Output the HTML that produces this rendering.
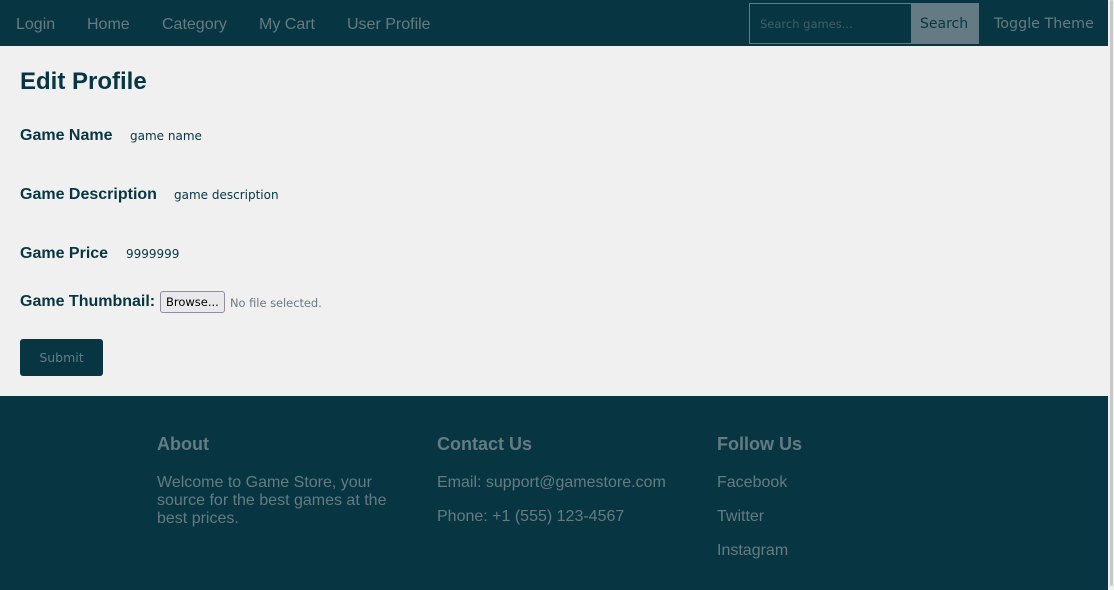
<!DOCTYPE html>
<html><head><style>
*{margin:0;padding:0;box-sizing:border-box}
body{width:1114px;height:590px;overflow:hidden;background:#f0f0f0;font-family:"Liberation Sans",sans-serif;position:relative}
.a{position:absolute;white-space:nowrap}
nav{position:absolute;left:0;top:0;width:1108px;height:46px;background:#073642}
nav .l{color:#657b83;font-size:16px;top:16px}
.dj{font-family:"DejaVu Sans",sans-serif}
footer{position:absolute;left:0;top:396px;width:1108px;height:194px;background:#073642;color:#657b83}
footer h3{position:absolute;font-size:18px;font-weight:bold;color:#657b83}
footer p{position:absolute;font-size:16px;line-height:18px;color:#657b83}
.lab{font-size:16px;font-weight:bold;color:#073642}
.val{color:#073642}
.sb{position:absolute;left:1108px;top:0;width:6px;height:590px;background:#f0f0f0}
.sb div{position:absolute;left:2px;top:0;width:3px;height:586px;background:#c8c8c8;border-radius:2px}
</style></head><body>
<nav>
<span class="a l" style="left:16px">Login</span>
<span class="a l" style="left:87px">Home</span>
<span class="a l" style="left:162px">Category</span>
<span class="a l" style="left:259px">My Cart</span>
<span class="a l" style="left:347px">User Profile</span>
<div class="a" style="left:749px;top:3px;width:163px;height:41px;border:1px solid #657b83;background:#073642"></div>
<span class="a dj" style="left:760px;top:17px;font-size:11.5px;color:#3f5f68">Search games...</span>
<div class="a" style="left:911px;top:3px;width:68px;height:41px;background:#657b83"></div>
<span class="a dj" style="left:920px;top:16px;font-size:14px;color:#073642">Search</span>
<span class="a dj" style="left:994px;top:16px;font-size:14.3px;color:#657b83">Toggle Theme</span>
</nav>
<div class="a" style="left:20px;top:68px;font-size:24px;font-weight:bold;color:#073642">Edit Profile</div>
<span class="a lab" style="left:20px;top:127px">Game Name</span><span class="a val dj" style="left:130px;top:129px;font-size:12px">game name</span>
<span class="a lab" style="left:20px;top:186px">Game Description</span><span class="a val dj" style="left:174px;top:188px;font-size:12px">game description</span>
<span class="a lab" style="left:20px;top:245px">Game Price</span><span class="a val dj" style="left:126px;top:247px;font-size:12px">9999999</span>
<span class="a lab" style="left:20px;top:293px">Game Thumbnail:</span>
<div class="a dj" style="left:160px;top:291px;width:65px;height:22px;border:1px solid #8f8f9d;border-radius:3px;background:#e9e9ed;font-size:11.5px;color:#000;padding:3px 0 0 5px">Browse...</div>
<span class="a dj" style="left:230px;top:296px;font-size:11.4px;color:#657b83">No file selected.</span>
<div class="a dj" style="left:20px;top:339px;width:83px;height:37px;background:#073642;border-radius:3px;color:#657b83;font-size:12.5px;text-align:center;line-height:38px">Submit</div>
<footer>
<h3 style="left:157px;top:38px">About</h3>
<p style="left:157px;top:78px;width:250px;white-space:normal">Welcome to Game Store, your source for the best games at the best prices.</p>
<h3 style="left:437px;top:38px">Contact Us</h3>
<p style="left:437px;top:78px">Email: support@gamestore.com</p>
<p style="left:437px;top:112px">Phone: +1 (555) 123-4567</p>
<h3 style="left:717px;top:38px">Follow Us</h3>
<p style="left:717px;top:78px">Facebook</p>
<p style="left:717px;top:112px">Twitter</p>
<p style="left:717px;top:146px">Instagram</p>
</footer>
<div class="sb"><div></div></div>
</body></html>
